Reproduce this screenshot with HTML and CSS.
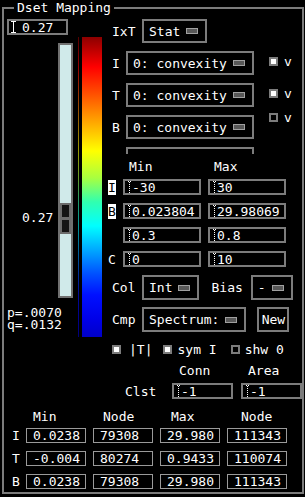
FILE: index.html
```html
<!DOCTYPE html>
<html lang="en">
<head>
  <meta charset="UTF-8">
  <meta name="viewport" content="width=device-width, initial-scale=1.0">
  <title>Dset Mapping</title>
  <link rel="stylesheet" href="styles.css">
</head>
<body>

<fieldset class="panel">
  <legend>Dset Mapping</legend>

  <div class="top">
    <!-- threshold slider and colour ramp -->
    <div class="scale-col">
      <div class="field value-field">
        <svg class="caret" width="5" height="12" viewBox="0 0 5 12"><path d="M0 .5h5M2.5 1v10M0 11.5h5" stroke="#fff"/></svg>
        <span class="value-text">0.27</span>
      </div>
      <div class="scale">
        <div class="scale-labels">
          <div class="thresh">0.27</div>
          <div class="pq">p=.0070<br>q=.0132</div>
        </div>
        <div class="slider">
          <div class="thumb"><span></span><span></span></div>
        </div>
        <div class="ramp-edge"></div>
        <div class="ramp"></div>
      </div>
    </div>

    <div class="controls">
      <div class="ixt">
        <span class="lbl">IxT</span>
        <span class="option">Stat<i class="ind"></i></span>
      </div>

      <div class="layers">
        <div class="menus">
          <div class="menu-row"><span class="lbl">I</span><span class="option">0: convexity<i class="ind"></i></span></div>
          <div class="menu-row"><span class="lbl">T</span><span class="option">0: convexity<i class="ind"></i></span></div>
          <div class="menu-row"><span class="lbl">B</span><span class="option">0: convexity<i class="ind"></i></span></div>
          <div class="menu-row"><span class="lbl"></span><span class="option blank"></span></div>
        </div>
        <div class="flags">
          <div class="flag"><span class="check"></span>v</div>
          <div class="flag"><span class="check"></span>v</div>
          <div class="flag"><span class="check off"></span>v</div>
        </div>
      </div>

      <div class="range-head">
        <span></span><span class="head">Min</span><span class="head">Max</span>
      </div>
      <div class="range">
        <span class="tag inv">I</span>
        <div class="field entry"><svg class="caret" width="4" height="13" viewBox="0 0 4 13"><path d="M0 .5h4M1.5 1v11M0 12.5h4" stroke="#fff" stroke-dasharray="1 1"/></svg>-30</div>
        <div class="field entry"><svg class="caret" width="4" height="13" viewBox="0 0 4 13"><path d="M0 .5h4M1.5 1v11M0 12.5h4" stroke="#fff" stroke-dasharray="1 1"/></svg>30</div>

        <span class="tag inv">B</span>
        <div class="field entry"><svg class="caret" width="4" height="13" viewBox="0 0 4 13"><path d="M0 .5h4M1.5 1v11M0 12.5h4" stroke="#fff" stroke-dasharray="1 1"/></svg>0.023804</div>
        <div class="field entry"><svg class="caret" width="4" height="13" viewBox="0 0 4 13"><path d="M0 .5h4M1.5 1v11M0 12.5h4" stroke="#fff" stroke-dasharray="1 1"/></svg>29.98069</div>

        <span class="tag"></span>
        <div class="field entry"><svg class="caret" width="4" height="13" viewBox="0 0 4 13"><path d="M0 .5h4M1.5 1v11M0 12.5h4" stroke="#fff" stroke-dasharray="1 1"/></svg>0.3</div>
        <div class="field entry"><svg class="caret" width="4" height="13" viewBox="0 0 4 13"><path d="M0 .5h4M1.5 1v11M0 12.5h4" stroke="#fff" stroke-dasharray="1 1"/></svg>0.8</div>

        <span class="tag">C</span>
        <div class="field entry"><svg class="caret" width="4" height="13" viewBox="0 0 4 13"><path d="M0 .5h4M1.5 1v11M0 12.5h4" stroke="#fff" stroke-dasharray="1 1"/></svg>0</div>
        <div class="field entry"><svg class="caret" width="4" height="13" viewBox="0 0 4 13"><path d="M0 .5h4M1.5 1v11M0 12.5h4" stroke="#fff" stroke-dasharray="1 1"/></svg>10</div>
      </div>

      <div class="opts-row col-row">
        <span class="lbl">Col</span>
        <span class="option tall">Int<i class="ind"></i></span>
        <span class="bias-lbl">Bias</span>
        <span class="option tall">-<i class="ind"></i></span>
      </div>
      <div class="opts-row cmp-row">
        <span class="lbl">Cmp</span>
        <span class="option tall">Spectrum:<i class="ind"></i></span>
        <button class="push">New</button>
      </div>

      <div class="toggles">
        <span class="check"></span><span class="tog-text">|T|</span>
        <span class="check sym"></span><span class="tog-text near">sym I</span>
        <span class="check off shw"></span><span class="tog-text near">shw 0</span>
      </div>

      <div class="cluster">
        <span></span><span class="head">Conn</span><span class="head">Area</span>
        <span class="clst">Clst</span>
        <div class="field entry"><svg class="caret" width="4" height="13" viewBox="0 0 4 13"><path d="M0 .5h4M1.5 1v11M0 12.5h4" stroke="#fff" stroke-dasharray="1 1"/></svg>-1</div>
        <div class="field entry"><svg class="caret" width="4" height="13" viewBox="0 0 4 13"><path d="M0 .5h4M1.5 1v11M0 12.5h4" stroke="#fff" stroke-dasharray="1 1"/></svg>-1</div>
      </div>
    </div>
  </div>

  <div class="stats-head">
    <span></span>
    <span class="h-min">Min</span>
    <span class="h-node">Node</span>
    <span class="h-max">Max</span>
    <span class="h-node2">Node</span>
  </div>
  <div class="stats">
    <span class="row-lbl">I</span>
    <span class="cell">0.0238</span><span class="cell">79308</span><span class="cell">29.980</span><span class="cell">111343</span>
    <span class="row-lbl">T</span>
    <span class="cell">-0.004</span><span class="cell">80274</span><span class="cell">0.9433</span><span class="cell">110074</span>
    <span class="row-lbl">B</span>
    <span class="cell">0.0238</span><span class="cell">79308</span><span class="cell">29.980</span><span class="cell">111343</span>
  </div>
</fieldset>

</body>
</html>
```

FILE: styles.css
```css
body {
  margin: 0;
  background-color: #000;
  color: #fff;
  font-family: "DejaVu Sans Mono", monospace;
  font-size: 13px;
  line-height: 15px;
}

.panel {
  width: 302px;
  min-width: 0;
  margin: 0 1px 0 2px;
  padding: 0 0 3px;
  border: 2px solid #7c7c7c;
  box-sizing: border-box;
}

legend {
  margin-left: 10px;
  padding: 0 3px;
  line-height: 15px;
}

.top {
  display: flex;
  align-items: flex-start;
}

/* left column */
.scale-col {
  width: 103px;
  padding-left: 3px;
  box-sizing: border-box;
}

.field {
  display: flex;
  align-items: center;
  height: 16px;
  border: 2px solid #7c7c7c;
  box-sizing: border-box;
  white-space: nowrap;
  overflow: hidden;
}

.caret {
  flex-shrink: 0;
}

.value-field {
  width: 61px;
  margin-top: 4px;
  padding-left: 2px;
}

.value-text {
  margin-left: 6px;
}

.scale {
  display: flex;
  height: 300px;
  margin-top: 2px;
}

.scale-labels {
  width: 51px;
  display: flex;
  flex-direction: column;
}

.thresh {
  margin-top: 173px;
  padding-left: 15px;
}

.pq {
  margin-top: 82px;
  line-height: 12px;
}

.slider {
  width: 15px;
  height: 255px;
  margin-top: 6px;
  border: 2px solid #707070;
  background-color: #d0eaea;
  box-sizing: border-box;
}

.thumb {
  display: flex;
  flex-direction: column;
  gap: 3px;
  height: 31px;
  margin-top: 158px;
  padding: 2px;
  background-color: #6c6c6c;
  box-sizing: border-box;
}

.thumb span {
  flex: 1;
  background-color: #141414;
}

.ramp,
.ramp-edge {
  height: 300px;
  background: linear-gradient(to bottom,
    #8c0000 0%, #ff0000 10%, #ff5000 19%, #ff9a00 27%, #ffff00 38%,
    #a8ff40 47%, #30ffb0 55%, #00ffff 63%, #00a8ff 71%, #0050ff 79%,
    #0010ff 86%, #0000e8 94%, #0000c8 100%);
}

.ramp-edge {
  width: 1px;
  margin-left: 5px;
  opacity: 0.6;
}

.ramp {
  width: 20px;
  margin-left: 3px;
}

/* right column */
.controls {
  flex: 1;
}

.lbl {
  flex-shrink: 0;
}

.ixt {
  display: flex;
  align-items: center;
  margin-top: 4px;
  padding-left: 8px;
}

.ixt .lbl,
.opts-row .lbl {
  width: 30px;
}

.option {
  display: inline-flex;
  align-items: center;
  gap: 6px;
  height: 24px;
  padding: 0 7px 0 5px;
  border: 2px solid #7c7c7c;
  box-sizing: border-box;
  white-space: nowrap;
  flex-shrink: 0;
}

.option.tall {
  height: 25px;
}

.option.blank {
  width: 128px;
}

.ind {
  display: block;
  width: 12px;
  height: 6px;
  border: 1px solid #a0a0a0;
  background-color: #585858;
  box-sizing: border-box;
}

.layers {
  display: flex;
}

.menus {
  display: flex;
  flex-direction: column;
  gap: 8px;
  width: 165px;
  height: 111px;
  padding-top: 8px;
  box-sizing: border-box;
  overflow: hidden;
}

.menu-row {
  display: flex;
  align-items: center;
  padding-left: 8px;
  flex-shrink: 0;
}

.menu-row .lbl {
  width: 14px;
}

.flags {
  display: flex;
  flex-direction: column;
  padding-top: 14px;
}

.flag {
  display: flex;
  align-items: flex-start;
  gap: 6px;
  height: 10px;
  line-height: 10px;
}

.flag + .flag {
  margin-top: 22px;
}

.flag:last-child {
  margin-top: 14px;
}

.check {
  display: block;
  width: 9px;
  height: 9px;
  border: 2px solid #7c7c7c;
  background-color: #fff;
  box-sizing: border-box;
  flex-shrink: 0;
}

.check.off {
  background-color: #000;
}

.range-head,
.range {
  display: grid;
  grid-template-columns: 8px 78px 78px;
  column-gap: 7px;
  padding-left: 4px;
}

.range-head {
  margin-top: 5px;
}

.head {
  padding-left: 6px;
}

.range {
  row-gap: 8px;
  margin-top: 5px;
}

.tag {
  align-self: center;
  height: 15px;
}

.tag.inv {
  align-self: end;
  background-color: #fff;
  color: #000;
}

.entry {
  padding-left: 3px;
}

.opts-row {
  display: flex;
  align-items: center;
  padding-left: 8px;
}

.col-row {
  margin-top: 8px;
}

.cmp-row {
  margin-top: 7px;
}

.bias-lbl {
  margin: 0 8px 0 12px;
}

.push {
  width: 32px;
  height: 25px;
  margin-left: 11px;
  padding: 0;
  border: 2px solid #7c7c7c;
  background-color: #000;
  color: #fff;
  font: inherit;
}

.toggles {
  display: flex;
  align-items: center;
  margin-top: 10px;
  padding-left: 8px;
}

.tog-text {
  margin-left: 8px;
}

.tog-text.near {
  margin-left: 5px;
}

.check.sym {
  margin-left: 11px;
}

.check.shw {
  margin-left: 14px;
}

.cluster {
  display: grid;
  grid-template-columns: 39px 61px 61px;
  column-gap: 8px;
  row-gap: 5px;
  margin-top: 6px;
  padding-left: 21px;
}

.cluster .head {
  padding-left: 7px;
}

.clst {
  align-self: center;
}

/* bottom table */
.stats-head,
.stats {
  display: grid;
  grid-template-columns: 7px repeat(4, 60px);
  column-gap: 7px;
  padding-left: 8px;
}

.stats-head {
  margin-top: 10px;
}

.h-min { padding-left: 7px; }
.h-node { padding-left: 10px; }
.h-max { padding-left: 11px; }
.h-node2 { padding-left: 14px; }

.stats {
  row-gap: 8px;
  margin-top: 4px;
}

.row-lbl {
  align-self: center;
}

.cell {
  height: 15px;
  padding-left: 6px;
  border: 1px solid #9a9a9a;
  line-height: 13px;
  box-sizing: border-box;
  white-space: nowrap;
}
```
